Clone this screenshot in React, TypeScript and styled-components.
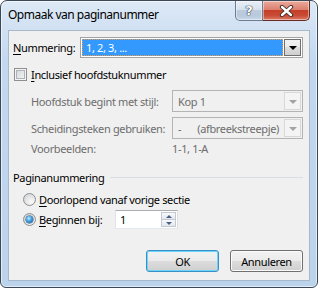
import styled, { createGlobalStyle } from "styled-components";

const GlobalStyle = createGlobalStyle`
  html, body {
    margin: 0;
    padding: 0;
    background: #ffffff;
  }
  body {
    font-family: "Noto Sans", "Liberation Sans", sans-serif;
    font-size: 11px;
    letter-spacing: -0.35px;
    color: #000;
  }
`;

const Window = styled.div`
  width: 318px;
  height: 288px;
  box-sizing: border-box;
  border: 1px solid #3b4858;
  border-radius: 7px 7px 6px 6px;
  background: linear-gradient(#dde9f6, #c3d8ef 60px, #bcd3ec);
  box-shadow: inset 0 0 0 1px rgba(255, 255, 255, 0.6);
  display: flex;
  flex-direction: column;
  padding: 0 7px 6px 7px;
`;

const TitleBar = styled.div`
  height: 29px;
  display: flex;
  align-items: flex-start;
  flex-shrink: 0;
`;

const Title = styled.div`
  flex: 1;
  font-size: 12px;
  letter-spacing: -0.5px;
  line-height: 28px;
  white-space: nowrap;
`;

const CaptionButton = styled.div<{ $kind: "help" | "close" }>`
  height: 20px;
  box-sizing: border-box;
  width: ${(p) => (p.$kind === "close" ? "47px" : "28px")};
  border: 1px solid ${(p) => (p.$kind === "close" ? "#6a2b22" : "#6d7c8f")};
  border-top: none;
  ${(p) =>
    p.$kind === "close"
      ? "border-radius: 0 0 5px 0; border-left: none;"
      : "border-radius: 0 0 0 5px;"}
  background: ${(p) =>
    p.$kind === "close"
      ? "linear-gradient(#ebab9d, #dc8070 45%, #c63f29 50%, #c84a33 75%, #dc7b66)"
      : "linear-gradient(#e9eff6, #d6e1ee 45%, #bccbdd 50%, #b8c9dc 75%, #c9d8ea)"};
  box-shadow: inset 0 0 0 1px rgba(255, 255, 255, 0.45);
  display: flex;
  align-items: center;
  justify-content: center;
  color: #fff;
  font-family: "DejaVu Sans", sans-serif;
  font-weight: bold;
  font-size: 13px;
  letter-spacing: 0;
  text-shadow: 0 0 1px #2a3441, 0 0 1px #2a3441, 0 0 1px #2a3441;
`;

const Client = styled.div`
  flex: 1;
  box-sizing: border-box;
  border: 1px solid #a6b8cb;
  background: #f0f0f0;
  display: flex;
  flex-direction: column;
`;

const Row = styled.div<{ $mt: number; $h: number; $pl: number }>`
  display: flex;
  align-items: center;
  margin-top: ${(p) => p.$mt}px;
  height: ${(p) => p.$h}px;
  padding-left: ${(p) => p.$pl}px;
  padding-right: 6px;
  flex-shrink: 0;
`;

const Label = styled.span<{ $w?: number; $disabled?: boolean }>`
  ${(p) => (p.$w ? `width: ${p.$w}px; flex-shrink: 0;` : "")}
  color: ${(p) => (p.$disabled ? "#6d6d6d" : "#000")};
  white-space: nowrap;
`;

const Key = styled.span`
  text-decoration: underline;
  text-underline-offset: 2px;
`;

const Combo = styled.div<{ $disabled?: boolean }>`
  flex: 1;
  height: 100%;
  box-sizing: border-box;
  border: 1px solid ${(p) => (p.$disabled ? "#b4b4b4" : "#a3a3a3")};
  background: ${(p) => (p.$disabled ? "#f0f0f0" : "#fff")};
  display: flex;
  align-items: stretch;
  padding: 1px;
  gap: 1px;
`;

const ComboValue = styled.div<{ $selected?: boolean }>`
  flex: 1;
  display: flex;
  align-items: center;
  padding-left: 3px;
  box-sizing: border-box;
  white-space: nowrap;
  ${(p) =>
    p.$selected
      ? "background: #3399ff; color: #fff; border: 1px dotted #f09a3c;"
      : "color: #6d6d6d; border: 1px solid transparent;"}
`;

const Gap = styled.span`
  display: inline-block;
  width: 16px;
`;

const DropButton = styled.div<{ $disabled?: boolean }>`
  width: 17px;
  box-sizing: border-box;
  border: 1px solid ${(p) => (p.$disabled ? "#d8d8d8" : "#707070")};
  background: ${(p) =>
    p.$disabled
      ? "#f4f4f4"
      : "linear-gradient(#f2f2f2, #ebebeb 50%, #dddddd 50%, #cfcfcf)"};
  display: flex;
  align-items: center;
  justify-content: center;
  &::after {
    content: "";
    border-left: 4px solid transparent;
    border-right: 4px solid transparent;
    border-top: 4px solid ${(p) => (p.$disabled ? "#a3a3a3" : "#000")};
    margin-top: 1px;
  }
`;

const CheckBox = styled.div`
  width: 13px;
  height: 13px;
  box-sizing: border-box;
  border: 1px solid #8e8f8f;
  background: linear-gradient(135deg, #cfd2d6, #f8f8f8);
  box-shadow: inset 0 0 0 1px #f4f4f4, inset 0 0 0 2px #aeb3b8;
  margin-right: 4px;
  flex-shrink: 0;
`;

const Radio = styled.div<{ $checked?: boolean }>`
  width: 13px;
  height: 13px;
  box-sizing: border-box;
  border-radius: 50%;
  border: 1px solid #8e8f8f;
  background: radial-gradient(circle at 65% 70%, #fbfbfb, #d4d6d9 80%);
  margin-right: 3px;
  flex-shrink: 0;
  display: flex;
  align-items: center;
  justify-content: center;
  &::after {
    content: "";
    display: ${(p) => (p.$checked ? "block" : "none")};
    width: 7px;
    height: 7px;
    border-radius: 50%;
    background: radial-gradient(circle at 40% 35%, #c6ecff, #3c9ee0 45%, #0d4f8f);
    box-shadow: 0 0 0 0.5px #1e4d78;
  }
`;

const GroupHeader = styled.div`
  display: flex;
  align-items: center;
  margin-top: 14px;
  height: 14px;
  padding-left: 4px;
  padding-right: 6px;
  gap: 6px;
  &::after {
    content: "";
    flex: 1;
    height: 1px;
    background: #d5dfe5;
    margin-top: 1px;
  }
`;

const SpinBox = styled.div`
  width: 63px;
  height: 100%;
  box-sizing: border-box;
  border: 1px solid #abadb3;
  border-color: #abadb3 #dbdfe6 #e3e9ef #e2e3ea;
  background: #fff;
  display: flex;
  padding: 1px;
`;

const SpinText = styled.div`
  flex: 1;
  display: flex;
  align-items: center;
  padding-left: 3px;
`;

const SpinButtons = styled.div`
  width: 15px;
  display: flex;
  flex-direction: column;
`;

const SpinHalf = styled.div<{ $dir: "up" | "down" }>`
  flex: 1;
  box-sizing: border-box;
  border: 1px solid #c3cad3;
  ${(p) => (p.$dir === "down" ? "border-top: none;" : "")}
  background: linear-gradient(#f8f9fb, #e3e7ec);
  display: flex;
  align-items: center;
  justify-content: center;
  &::after {
    content: "";
    border-left: 3px solid transparent;
    border-right: 3px solid transparent;
    ${(p) =>
      p.$dir === "up"
        ? "border-bottom: 3px solid #4b5f82;"
        : "border-top: 3px solid #4b5f82;"}
  }
`;

const ButtonBar = styled.div`
  margin-top: auto;
  display: flex;
  justify-content: flex-end;
  gap: 11px;
  padding: 0 6px 8px 0;
`;

const PushButton = styled.div<{ $default?: boolean }>`
  width: 73px;
  height: 22px;
  box-sizing: border-box;
  border-radius: 3px;
  border: 1px solid ${(p) => (p.$default ? "#3c8fc6" : "#707070")};
  background: linear-gradient(#f2f2f2, #ebebeb 50%, #dddddd 50%, #cfcfcf);
  box-shadow: inset 0 0 0 1px ${(p) => (p.$default ? "#6ad6f9" : "#fbfbfb")};
  display: flex;
  align-items: center;
  justify-content: center;
`;

export default function App() {
  return (
    <>
      <GlobalStyle />
      <Window>
        <TitleBar>
          <Title>Opmaak van paginanummer</Title>
          <CaptionButton $kind="help">?</CaptionButton>
          <CaptionButton $kind="close">
            <svg width="15" height="12" viewBox="0 0 15 12">
              <path d="M3 2 L12 10 M12 2 L3 10" stroke="#3a2a28" strokeWidth="4.2" strokeLinecap="round" />
              <path d="M3 2 L12 10 M12 2 L3 10" stroke="#fff" strokeWidth="2.4" strokeLinecap="round" />
            </svg>
          </CaptionButton>
        </TitleBar>
        <Client>
          <Row $mt={6} $h={21} $pl={4}>
            <Label $w={67}>
              <Key>N</Key>ummering:
            </Label>
            <Combo>
              <ComboValue $selected>1, 2, 3, ...</ComboValue>
              <DropButton />
            </Combo>
          </Row>
          <Row $mt={10} $h={13} $pl={5}>
            <CheckBox />
            <Label>
              <Key>I</Key>nclusief hoofdstuknummer
            </Label>
          </Row>
          <Row $mt={9} $h={22} $pl={22}>
            <Label $w={141} $disabled>
              Hoofdstuk begint met stijl:
            </Label>
            <Combo $disabled>
              <ComboValue>Kop 1</ComboValue>
              <DropButton $disabled />
            </Combo>
          </Row>
          <Row $mt={5} $h={22} $pl={22}>
            <Label $w={141} $disabled>
              Scheidingsteken gebruiken:
            </Label>
            <Combo $disabled>
              <ComboValue>
                -<Gap />(afbreekstreepje)
              </ComboValue>
              <DropButton $disabled />
            </Combo>
          </Row>
          <Row $mt={1} $h={16} $pl={22}>
            <Label $w={141} $disabled>
              Voorbeelden:
            </Label>
            <Label $disabled>1-1, 1-A</Label>
          </Row>
          <GroupHeader>Paginanummering</GroupHeader>
          <Row $mt={7} $h={16} $pl={14}>
            <Radio />
            <Label>
              <Key>D</Key>oorlopend vanaf vorige sectie
            </Label>
          </Row>
          <Row $mt={3} $h={19} $pl={14}>
            <Radio $checked />
            <Label $w={76}>
              <Key>B</Key>eginnen bij:
            </Label>
            <SpinBox>
              <SpinText>1</SpinText>
              <SpinButtons>
                <SpinHalf $dir="up" />
                <SpinHalf $dir="down" />
              </SpinButtons>
            </SpinBox>
          </Row>
          <ButtonBar>
            <PushButton $default>OK</PushButton>
            <PushButton>Annuleren</PushButton>
          </ButtonBar>
        </Client>
      </Window>
    </>
  );
}
